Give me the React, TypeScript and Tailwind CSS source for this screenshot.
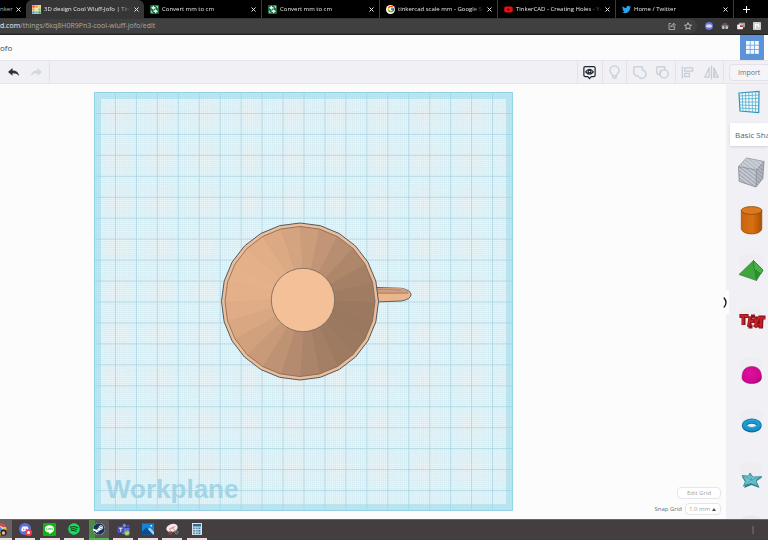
import { useState, type ReactNode } from 'react';
import { FcGoogle } from 'react-icons/fc';
import { FaDiscord, FaSpotify, FaSteam, FaTwitter, FaYoutube } from 'react-icons/fa';

type Tab = { id: string; title: string; icon: ReactNode };
type Tool = { label: string; divider: boolean; active?: boolean; icon: ReactNode };
type Shape = { label: string; drawing: ReactNode };

const TINKERCAD_TILES = [
  '#e8453c', '#f08a2c', '#f6c544',
  '#e9a13b', '#f7e08a', '#7cc46a',
  '#3f9bd8', '#57b8c9', '#4c9f50',
];

function TinkercadIcon() {
  return (
    <svg viewBox="0 0 9 9" className="size-[9px] shrink-0" aria-hidden="true">
      <rect width="9" height="9" fill="#f4efe0" />
      {TINKERCAD_TILES.map((color, i) => (
        <rect key={i} x={(i % 3) * 3 + 0.3} y={Math.floor(i / 3) * 3 + 0.3} width="2.4" height="2.4" fill={color} />
      ))}
    </svg>
  );
}

function ConvertIcon() {
  return (
    <svg viewBox="0 0 9 9" className="size-[9px] shrink-0" aria-hidden="true">
      <rect width="9" height="9" rx="1" fill="#1c6b41" />
      <path d="M4 .6 1 2.800 4 5V3.800h1.400V1.900H4zM5 4 8 6.200 5 8.400V7.100H3.600V5.200H5z" fill="#e4f3ea" />
      <path d="M5.800 1.200h1.700v2M1.400 5.600v2h1.400" fill="none" stroke="#b9e0ca" strokeWidth=".9" />
    </svg>
  );
}

function GoogleIcon() {
  return (
    <span className="flex size-[9px] shrink-0 items-center justify-center rounded-full bg-white">
      <FcGoogle className="size-2" />
    </span>
  );
}

const TABS: Tab[] = [
  { id: 'design', title: '3D design Cool Wluff-Jofo | Tink', icon: <TinkercadIcon /> },
  { id: 'convert-1', title: 'Convert mm to cm', icon: <ConvertIcon /> },
  { id: 'convert-2', title: 'Convert mm to cm', icon: <ConvertIcon /> },
  { id: 'google', title: 'tinkercad scale mm - Google Sea', icon: <GoogleIcon /> },
  {
    id: 'youtube',
    title: 'TinkerCAD - Creating Holes - Yo',
    icon: <FaYoutube className="size-[9px] shrink-0 text-[#f00d14]" />,
  },
  { id: 'twitter', title: 'Home / Twitter', icon: <FaTwitter className="size-[9px] shrink-0 text-[#2aa3ef]" /> },
];

function CloseIcon() {
  return (
    <svg viewBox="0 0 5 5" className="size-[5px]" aria-hidden="true">
      <path d="M.5.5l4 4M4.500.5l-4 4" stroke="#e8e8e8" strokeWidth="1" />
    </svg>
  );
}

function TabBar() {
  const [active, setActive] = useState('design');
  return (
    <nav className="flex h-[18px] shrink-0 overflow-hidden bg-black text-[6px] font-medium text-[#e8e8e8]">
      <div className="flex w-[26px] shrink-0 items-center justify-between pr-[5px]">
        <span className="text-[#b5b5b5]">nker</span>
        <button aria-label="Close tab"><CloseIcon /></button>
      </div>
      {TABS.map(tab => (
        <div
          key={tab.id}
          className={`flex w-[118px] shrink-0 items-center gap-[3px] pr-[5px] pl-[6px] ${
            tab.id === active ? 'rounded-t-md bg-[#363636]' : 'border-r border-[#3c3c3c]'
          }`}
        >
          {tab.icon}
          <button
            onClick={() => setActive(tab.id)}
            className="min-w-0 flex-1 mask-r-from-85% text-left leading-[10px] whitespace-nowrap"
          >
            {tab.title}
          </button>
          <button aria-label={`Close ${tab.title}`} className="shrink-0"><CloseIcon /></button>
        </div>
      ))}
      <button aria-label="New tab" className="flex w-6 shrink-0 items-center justify-center">
        <svg viewBox="0 0 7 7" className="size-[7px]" aria-hidden="true">
          <path d="M3.500 0v7M0 3.500h7" stroke="#fff" strokeWidth="1" />
        </svg>
      </button>
    </nav>
  );
}

function AddressBar() {
  return (
    <div className="flex h-[17px] shrink-0 items-center justify-between border-b border-[#222] bg-[#363636] pr-[7px] text-[7px]">
      <div className="flex h-3.5 flex-1 items-center rounded-r-full bg-[#404040] pr-[5px]">
        <label htmlFor="address" className="text-[#f0f0f0]">d.com</label>
        <input
          id="address"
          defaultValue="/things/6kq8H0R9Pn3-cool-wluff-jofo/edit"
          className="min-w-0 flex-1 bg-transparent text-[#a8a8a8] outline-none"
        />
        <button aria-label="Share" className="mr-2">
          <svg viewBox="0 0 8 8" className="size-2" fill="none" stroke="#b9b9b9" strokeWidth=".8" aria-hidden="true">
            <path d="M3 1.500H1v6h5.600V5" />
            <path d="M2.600 5.200c.2-1.600 1.200-2.600 2.900-2.700V1l2.100 2.100-2.100 2V3.800c-1.300 0-2.200.4-2.900 1.400z" />
          </svg>
        </button>
        <button aria-label="Bookmark">
          <svg viewBox="0 0 24 24" className="size-2" fill="none" stroke="#d5d5d5" strokeWidth="2.400" aria-hidden="true">
            <path d="M12 2l3 7 7.500.700-5.700 5 1.700 7.300L12 18.200 5.500 22l1.700-7.300-5.700-5L9 9z" />
          </svg>
        </button>
      </div>
      <div className="ml-2 flex gap-2">
        <button aria-label="Chat extension">
          <svg viewBox="0 0 8 8" className="size-2" aria-hidden="true">
            <circle cx="4" cy="4" r="4" fill="#6673cf" />
            <rect x="1.300" y="2.500" width="5.400" height="3" rx="1.300" fill="#eceefb" />
            <path d="M2.600 4h.8M4.600 4h.8" stroke="#6673cf" strokeWidth=".9" />
          </svg>
        </button>
        <button aria-label="Incognito extension">
          <svg viewBox="0 0 8 8" className="size-2" aria-hidden="true">
            <path d="M2 1h4l.7 2.500H1.300z" fill="#6e4f46" />
            <path d="M.3 3.800h7.400" stroke="#c58f7c" strokeWidth=".9" />
            <circle cx="2.300" cy="5.600" r="1.500" fill="#c3cad6" />
            <circle cx="5.700" cy="5.600" r="1.500" fill="#c3cad6" />
            <path d="M3.300 5.200h1.400" stroke="#c33e36" strokeWidth="1" />
          </svg>
        </button>
        <button aria-label="Window extension">
          <svg viewBox="0 0 8 8" className="size-2" aria-hidden="true">
            <rect x="2" y=".8" width="6" height="4.500" rx=".6" fill="#a7a7a7" />
            <rect x=".2" y="2.600" width="5.800" height="4.600" rx=".6" fill="#f2f2f2" />
            <path d="M3 3.300h3.500L5.700 5H3z" fill="#c9342c" />
          </svg>
        </button>
        <button aria-label="Notes extension">
          <svg viewBox="0 0 8 8" className="size-2" aria-hidden="true">
            <rect width="8" height="8" rx=".8" fill="#cfcfcf" />
            <path d="M2.500 6.500V2.500c1-1 1.700.2 1.700 1.300 0-1.400 1.600-1.600 1.600-.2v1.700" fill="none" stroke="#fff" strokeWidth="1.100" />
          </svg>
        </button>
      </div>
    </div>
  );
}

function Header() {
  return (
    <header className="flex h-[25px] shrink-0 items-center justify-between bg-[#fcfcfc] pr-1">
      <h1 className="text-[8px] text-[#3b4a5a]">ofo</h1>
      <button aria-label="Dashboard" className="flex h-full w-6 items-center justify-center bg-[#5c93d8]">
        <svg viewBox="0 0 13 13" className="size-[13px]" aria-hidden="true">
          {[0, 1, 2].map(row =>
            [0, 1, 2].map(col => (
              <rect key={`${row}${col}`} x={col * 4.5} y={row * 4.5} width="3.800" height="3.800" fill="#f3f8ff" />
            )),
          )}
        </svg>
      </button>
    </header>
  );
}

const TOOLS: Tool[] = [
  {
    label: 'Show all',
    divider: true,
    active: true,
    icon: (
      <>
        <path d="M3.500 1.700h9q1.500 0 1.500 1.500v7.600q0 1.500-1.500 1.500h-2.600L8 14.600l-1.900-2.300H3.500Q2 12.300 2 10.800V3.200q0-1.500 1.500-1.500z" />
        <path d="M3.900 7.200Q8 1.900 12.100 7.200 8 12.100 3.900 7.200z" />
        <circle cx="8" cy="7" r="1.500" />
      </>
    ),
  },
  {
    label: 'Hide',
    divider: true,
    icon: <path d="M6 11.500c0-2-2.900-2.800-2.900-5.700a4.900 4.900 0 0 1 9.800 0c0 2.900-2.900 3.700-2.900 5.700zM6.200 12v1.500q1.800 1.200 3.600 0V12" />,
  },
  {
    label: 'Group',
    divider: true,
    icon: <path d="M2 2h9v3.300a4.500 4.500 0 1 1-4.600 6.400H4.500L2 9.500z" />,
  },
  {
    label: 'Ungroup',
    divider: false,
    icon: (
      <>
        <path d="M5.500 10.500H4L2 8.500V2h8.500v2.500" />
        <circle cx="9.800" cy="9.500" r="4.300" />
        <path d="M5.500 10.500V6.500l1.800-.9" />
      </>
    ),
  },
  {
    label: 'Align',
    divider: true,
    icon: (
      <>
        <path d="M2.500 1.500v13" />
        <path d="M5 3h8.500v3.500H5zM5 9h5v3.500H5z" />
      </>
    ),
  },
  {
    label: 'Mirror',
    divider: false,
    icon: (
      <>
        <path d="M8 .5v15M5.500 3v10H.8zM10.500 3v10h4.700z" />
        <path d="M11.500 7v5" />
      </>
    ),
  },
];

function Toolbar() {
  return (
    <div className="flex h-6 shrink-0 overflow-hidden border-y border-[#e5e5eb] bg-[#f1f0f5]">
      <div className="flex w-[50px] shrink-0 items-center border-r border-[#e2e2e8]">
        <button aria-label="Undo" className="ml-2">
          <svg viewBox="0 0 11 9" className="h-[9px] w-[11px] text-[#2c333b]" aria-hidden="true">
            <path d="M4.500 0v2.500C8 2.500 10.600 4 11 8 9.500 5.800 7.500 5.200 4.500 5.200v2.600L0 3.900z" fill="currentColor" />
          </svg>
        </button>
        <button aria-label="Redo" className="ml-3">
          <svg viewBox="0 0 11 9" className="h-[9px] w-[11px] text-[#d0d8e1]" aria-hidden="true">
            <path d="M6.500 0v2.500C3 2.500.4 4 0 8c1.500-2.200 3.500-2.800 6.500-2.800v2.600L11 3.900z" fill="currentColor" />
          </svg>
        </button>
      </div>
      <div className="flex-1" />
      <div className="flex w-[147px] shrink-0 border-r border-[#e2e2e8]">
        {TOOLS.map(tool => (
          <button
            key={tool.label}
            aria-label={tool.label}
            className={`flex flex-1 items-center justify-center ${tool.divider ? 'border-l border-[#e2e2e8]' : ''}`}
          >
            <svg
              viewBox="0 0 16 16"
              className={`size-[15px] ${tool.active ? 'text-[#1f262e]' : 'text-[#c3ccd7]'}`}
              fill="none"
              stroke="currentColor"
              strokeWidth="1.300"
              strokeLinejoin="round"
              aria-hidden="true"
            >
              {tool.icon}
            </svg>
          </button>
        ))}
      </div>
      <div className="flex w-11 shrink-0 items-center pl-[5px]">
        <button className="h-[17px] w-full rounded-l-sm border border-r-0 border-[#e2e2e8] bg-[#f5f5f9] pl-2 text-left text-[7px] leading-[15px] font-medium text-[#6d747c]">
          Import
        </button>
      </div>
    </div>
  );
}

const SIDES = 24;

function ringPoint(cx: number, cy: number, r: number, i: number) {
  const a = ((i * 360) / SIDES) * (Math.PI / 180);
  return `${(cx + r * Math.cos(a)).toFixed(2)},${(cy + r * Math.sin(a)).toFixed(2)}`;
}

function ring(cx: number, cy: number, r: number) {
  return Array.from({ length: SIDES }, (_, i) => ringPoint(cx, cy, r, i)).join(' ');
}

// light falls from the upper left, so the lower right wall is darkest
function facetColor(i: number) {
  const a = (((i + 0.5) * 360) / SIDES - 25) * (Math.PI / 180);
  const t = (1 - Math.cos(a)) / 2;
  const dark = [154, 119, 95];
  const light = [229, 177, 138];
  return `rgb(${dark.map((d, k) => Math.round(d + (light[k] - d) * t)).join(',')})`;
}

function Cup() {
  return (
    <g strokeLinejoin="round">
      <path d="M282 195.500l25.500.8q9.500 2 9.500 6.400t-9.500 6.300L282 210z" fill="#ecb68d" stroke="#566069" strokeWidth="1" />
      <path d="M282 196h25q7 1.500 8 5l-33 .2z" fill="#cfa07e" />
      <path d="M282 201.200h32" fill="none" stroke="#7c6557" strokeWidth=".6" />
      <path d="M282 197.500q16-.3 25 .8" fill="none" stroke="#8d7464" strokeWidth=".5" />
      <polygon points={ring(206, 209.5, 78.5)} fill="#edbd98" stroke="#4d5a65" strokeWidth="1" />
      <polygon points={ring(206, 209.5, 75)} fill="#c99a77" />
      {Array.from({ length: SIDES }, (_, i) => {
        const color = facetColor(i);
        return (
          <polygon
            key={i}
            points={[
              ringPoint(206, 209.5, 75, i),
              ringPoint(206, 209.5, 75, i + 1),
              ringPoint(209, 208, 31, i + 1),
              ringPoint(209, 208, 31, i),
            ].join(' ')}
            fill={color}
            stroke={color}
            strokeWidth=".4"
          />
        );
      })}
      <polygon points={ring(206, 209.5, 75)} fill="none" stroke="#806b5f" strokeWidth=".8" />
      <circle cx="209" cy="208" r="31.700" fill="#f4c097" stroke="#6f665f" strokeWidth=".8" />
    </g>
  );
}

const PLANE = 419;

function gridPath(cells: number) {
  const step = PLANE / cells;
  return Array.from({ length: cells }, (_, i) => {
    const p = (i * step + 0.5).toFixed(2);
    return `M${p} 0V${PLANE}M0 ${p}H${PLANE}`;
  }).join('');
}

const FINE_GRID = gridPath(200);
const MAJOR_GRID = gridPath(20);

function Workplane() {
  return (
    <svg viewBox="0 0 419 419" className="h-full" role="img" aria-label="Workplane with a cup seen from above">
      <rect width="419" height="419" fill="#f1f9fb" />
      <path d={FINE_GRID} stroke="#a6d9e8" strokeWidth=".8" opacity=".42" />
      <path d={MAJOR_GRID} stroke="#7fb9cb" strokeWidth=".8" opacity=".5" />
      <rect x="3.500" y="3.500" width="412" height="412" fill="none" stroke="#93d8ec" strokeWidth="7" opacity=".5" />
      <rect x=".5" y=".5" width="418" height="418" fill="none" stroke="#8ccfe2" strokeWidth="1" opacity=".8" />
      <text x="12" y="406" fontSize="26" fontWeight="700" fontFamily="Liberation Sans, Arial, sans-serif" fill="#a3d5e6">
        Workplane
      </text>
      <Cup />
    </svg>
  );
}

function GridControls() {
  return (
    <div className="flex flex-col items-end justify-end gap-1 pr-[5px] pb-1 text-[6px] font-medium text-[#9b9fa5]">
      <button className="h-3 w-11 rounded-sm border border-[#e6e6ea] bg-white leading-[10px]">Edit Grid</button>
      <div className="flex items-center gap-[3px]">
        <label htmlFor="snap" className="text-[#667080]">Snap Grid</label>
        <div className="flex h-3 w-9 items-center rounded-sm border border-[#e6e6ea] bg-white pr-1 pl-[3px]">
          <select id="snap" defaultValue="1.0" className="min-w-0 flex-1 appearance-none bg-transparent leading-[10px] outline-none">
            <option value="0.5">0.5 mm</option>
            <option value="1.0">1.0 mm</option>
            <option value="2.0">2.0 mm</option>
          </select>
          <svg viewBox="0 0 4 3" className="h-[3px] w-1 shrink-0" aria-hidden="true">
            <path d="M2 0l2 3H0z" fill="#4b4f55" />
          </svg>
        </div>
      </div>
    </div>
  );
}

// every drawing sits in a 42x51 cell
const SHAPES: Shape[] = [
  {
    label: 'Box hole',
    drawing: (
      <>
        <defs>
          <pattern id="hatch" width="3" height="3" patternUnits="userSpaceOnUse" patternTransform="rotate(38)">
            <rect width="3" height="3" fill="#cdd0d8" />
            <rect width="3" height="1.400" fill="#9ea3b1" />
          </pattern>
        </defs>
        <path d="M12.500 18.500L20.500 10l17.500 3.500-1.200 17L30 39 13.200 33.500z" fill="url(#hatch)" stroke="#858994" strokeWidth=".8" />
        <path d="M12.500 18.500L30.500 22 38 13.500 20.500 10z" fill="#d4d6dd" opacity=".4" />
        <path d="M30.500 22L38 13.500 36.800 30.500 30 39z" fill="#868b99" opacity=".3" />
        <path d="M12.500 18.500L30.500 22 38 13.500M30.500 22L30 39" fill="none" stroke="#858994" strokeWidth=".7" />
      </>
    ),
  },
  {
    label: 'Cylinder',
    drawing: (
      <>
        <path d="M15.300 11.500v18.200c1 7 19.500 7 20.500 0V11.500z" fill="url(#orange)" stroke="#8f4a0c" strokeWidth=".7" />
        <ellipse cx="25.600" cy="11.500" rx="10.300" ry="3.900" fill="#dc7920" stroke="#8f4a0c" strokeWidth=".8" />
        <defs>
          <linearGradient id="orange">
            <stop offset="0" stopColor="#c9650f" />
            <stop offset=".55" stopColor="#d9700f" />
            <stop offset="1" stopColor="#a85008" />
          </linearGradient>
        </defs>
      </>
    ),
  },
  {
    label: 'Pyramid',
    drawing: (
      <>
        <ellipse cx="25" cy="12" rx="13" ry="9" fill="#eeedf1" />
        <g stroke="#247a26" strokeWidth=".6" strokeLinejoin="round">
          <path d="M27.500 10.500L13 24.500l17.500 6z" fill="#3fa53f" />
          <path d="M27.500 10.500L37 20l-6.500 10.500z" fill="#2c8f31" />
          <path d="M27.500 10.500L37 20l-2 4-7-5z" fill="#45b347" />
        </g>
      </>
    ),
  },
  {
    label: 'Text',
    drawing: (
      <>
        <ellipse cx="25" cy="13" rx="12" ry="7" fill="#eeedf1" />
        <g fill="none" strokeLinejoin="bevel">
          <path d="M13.500 15h9M17.500 15v9M24.500 15.500L23 26M23.500 20h5M25 15.500h4M22.500 25.500h4M29.500 15.500l2 11M34 16l-5 10.500M32.500 16.500h7M35.500 17.500l-.5 10" stroke="#8c151b" strokeWidth="4" />
          <path d="M13.500 14.500l9 .8M17 15v8.500M24 15.500L22.500 25M23.500 20h4M28.500 16l2.500 10M33 16.500L28 25.500M32 16.500l7 .8M35 17.500v9" stroke="#c4212a" strokeWidth="1.900" />
        </g>
      </>
    ),
  },
  {
    label: 'Half sphere',
    drawing: (
      <>
        <ellipse cx="25" cy="13" rx="12" ry="8" fill="#eeedf1" />
        <path d="M16 25.500C16 18 20 14.500 25.800 14.500S35.500 18 35.500 25.500c0 8-19.500 8-19.500 0z" fill="url(#magenta)" stroke="#970869" strokeWidth=".5" />
        <defs>
          <radialGradient id="magenta" cx=".4" cy=".4" r=".7">
            <stop offset="0" stopColor="#e00fa0" />
            <stop offset=".7" stopColor="#d20891" />
            <stop offset="1" stopColor="#a40572" />
          </radialGradient>
        </defs>
      </>
    ),
  },
  {
    label: 'Torus',
    drawing: (
      <>
        <ellipse cx="25" cy="13" rx="12" ry="7" fill="#eeedf1" />
        <ellipse cx="25.800" cy="22.500" rx="7.300" ry="4.300" fill="none" stroke="#0b6f9f" strokeWidth="5.200" />
        <ellipse cx="25.800" cy="22" rx="7.300" ry="4" fill="none" stroke="#1794cb" strokeWidth="3.900" />
        <ellipse cx="25.800" cy="21" rx="7" ry="3.600" fill="none" stroke="#38addc" strokeWidth="1" opacity=".7" />
      </>
    ),
  },
  {
    label: 'Star',
    drawing: (
      <>
        <ellipse cx="25" cy="16" rx="12" ry="8" fill="#eeedf1" />
        <path d="M24 20l3 4 9-.5-6 4 3.500 6.500-8-3-7.500 3 2-5L16 23l6.500.5z" fill="#2c7f8c" />
        <path d="M24 19l3 4 9-.5-6 4 2.500 6-7.500-3-7.500 2.500 2-5L16 21.500l6.500.5z" fill="#6cc4cf" stroke="#2d7c88" strokeWidth=".7" strokeLinejoin="round" />
        <path d="M24 19l1.500 7 10.500-3.500M25.500 26l7 6.500M25.500 26l-8 6M25.500 26L16 21.500" fill="none" stroke="#429aa6" strokeWidth=".7" />
      </>
    ),
  },
];

function ShapesPanel() {
  return (
    <aside className="relative w-[42px] shrink-0 bg-[#f1f0f5]">
      <button
        aria-label="Collapse shapes panel"
        className="absolute top-[206px] -left-[5px] z-10 flex h-6 w-2 items-center justify-center bg-[#fcfcfc]"
      >
        <svg viewBox="0 0 4 11" className="h-[11px] w-1" fill="none" aria-hidden="true">
          <path d="M.8.5q4.400 5 0 10" stroke="#15181c" strokeWidth="1.300" />
        </svg>
      </button>
      <div className="flex h-full flex-col overflow-hidden">
        <button aria-label="Workplane" className="h-[39px] shrink-0">
          <svg viewBox="0 0 42 39" className="h-[39px] w-[42px]" aria-hidden="true">
            <path d="M13 9l20-1.500-.3 21L14 27z" fill="#f5fbfd" stroke="#2b93b8" strokeWidth="1.200" />
            <path d="M13.200 12l19.600-1M13.300 15l19.500-.6M13.500 18h19.300M13.700 21l19 .6M13.800 24l19 1M16.200 9l.7 18.200M19.500 8.600l.4 18.800M22.800 8.300l.3 19.400M26.200 8l.2 20M29.600 7.700v20.500" stroke="#50aecb" strokeWidth=".8" />
          </svg>
        </button>
        <div className="ml-1 flex h-[23px] shrink-0 items-center bg-white shadow-sm">
          <select
            aria-label="Shape library"
            className="h-full w-full appearance-none bg-transparent pl-[5px] text-[8px] leading-[10px] text-[#566270] outline-none"
          >
            <option>Basic Shapes</option>
            <option>Text and Numbers</option>
          </select>
        </div>
        <div className="mt-0.5 flex flex-col">
          {SHAPES.map(shape => (
            <button key={shape.label} aria-label={shape.label} className="h-[51px] shrink-0">
              <svg viewBox="0 0 42 51" className="h-[51px] w-[42px]" aria-hidden="true">
                {shape.drawing}
              </svg>
            </button>
          ))}
          <svg viewBox="0 0 42 51" className="h-[51px] w-[42px] shrink-0" aria-hidden="true">
            <ellipse cx="25" cy="17" rx="11" ry="7" fill="#eae9ed" />
          </svg>
        </div>
      </div>
    </aside>
  );
}

const TASKBAR_APPS: { label: string; icon: ReactNode }[] = [
  {
    label: 'Discord',
    icon: (
      <span className="relative flex size-3 items-center justify-center rounded-full bg-[#5f6fe0]">
        <FaDiscord className="size-2 text-white" />
        <span className="absolute -right-px -bottom-px flex size-[7px] items-center justify-center rounded-full bg-[#e9404c]">
          <span className="size-[3px] rounded-full bg-white" />
        </span>
      </span>
    ),
  },
  {
    label: 'LINE',
    icon: (
      <svg viewBox="0 0 13 13" className="size-[13px]" aria-hidden="true">
        <rect width="13" height="13" rx="1" fill="#0db513" />
        <path d="M6.500 2.200c2.700 0 4.700 1.600 4.700 3.700 0 2-2 3.300-4.500 5.200-.5.300-.4-.6-.5-1.500-2.500-.2-4.400-1.700-4.400-3.700 0-2.100 2-3.700 4.700-3.700z" fill="#fff" />
        <path d="M3.600 5v1.800h1M5.600 5v1.800M6.700 6.800V5l1.100 1.800V5M10 5H9v1.800h1" fill="none" stroke="#0db513" strokeWidth=".5" />
      </svg>
    ),
  },
  {
    label: 'Spotify',
    icon: (
      <span className="rounded-full bg-[#173b22]">
        <FaSpotify className="size-3 text-[#1ed760]" />
      </span>
    ),
  },
  {
    label: 'Steam',
    icon: (
      <span className="rounded-full bg-white">
        <FaSteam className="size-3 text-[#12345c]" />
      </span>
    ),
  },
  {
    label: 'Teams',
    icon: (
      <svg viewBox="0 0 13 13" className="size-[13px]" aria-hidden="true">
        <circle cx="7.300" cy="2.600" r="1.800" fill="#7b83eb" />
        <circle cx="11" cy="3.300" r="1.200" fill="#5059c9" />
        <path d="M5 5h7.500v3.500q-.5 2.500-3 2.500H5z" fill="#656edb" />
        <rect x=".5" y="3.500" width="6.500" height="6.500" rx=".6" fill="#4b53bc" />
        <path d="M2 5.200h3.500M3.750 5.200v3.500" stroke="#fff" strokeWidth=".9" />
        <circle cx="10" cy="10" r="2.600" fill="#92c353" />
        <path d="M8.800 10l.9.900 1.600-1.700" fill="none" stroke="#fff" strokeWidth=".7" />
      </svg>
    ),
  },
  {
    label: 'Photos',
    icon: (
      <svg viewBox="0 0 12 12" className="size-3" aria-hidden="true">
        <rect y=".5" width="12" height="11" fill="#1583d8" />
        <path d="M0 11.500V9l4.200-4.600L11 11.500z" fill="#0d4d8c" />
        <path d="M6 6.200L7.800 4.600 12 9v2.500h-1z" fill="#9fd3f6" />
        <rect x="8.500" y="2" width="1.500" height="1.500" fill="#e5f4ff" />
      </svg>
    ),
  },
  {
    label: 'Snipping Tool',
    icon: (
      <svg viewBox="0 0 13 13" className="size-[13px]" aria-hidden="true">
        <ellipse cx="6" cy="5" rx="5.800" ry="4" fill="#f3e9e9" transform="rotate(-18 6 5)" />
        <path d="M3 6.500L9 3.500M6 4.500l4 4" stroke="#d2696c" strokeWidth=".8" />
        <circle cx="4.500" cy="9.800" r="1.600" fill="none" stroke="#c93b42" strokeWidth="1" />
        <circle cx="10.500" cy="9.300" r="1.500" fill="none" stroke="#6c93b4" strokeWidth="1" />
      </svg>
    ),
  },
  {
    label: 'Calculator',
    icon: (
      <svg viewBox="0 0 10 12" className="h-3 w-2.5" aria-hidden="true">
        <rect width="10" height="12" fill="#d7e6ee" />
        <rect x="1" y="1" width="8" height="2.500" fill="#2f6f92" />
        {[4.5, 7, 9.5].map(y =>
          [1, 3.7, 6.4].map(x => (
            <rect key={`${x}-${y}`} x={x} y={y} width="2" height="1.700" fill={x > 6 ? '#2385bb' : '#6b8fa3'} />
          )),
        )}
      </svg>
    ),
  },
];

function Taskbar() {
  return (
    <footer className="flex h-[21px] shrink-0 items-center justify-between border-t border-[#6a6466] bg-[#443e40] pr-[14px]">
      <div className="flex h-full gap-[3px]">
        <button aria-label="Chrome" className="flex h-full w-3 items-center overflow-hidden border-b-2 border-[#eadfe0] bg-[#686264]">
          <svg viewBox="0 0 7 13" className="h-[13px] w-[7px]" aria-hidden="true">
            <path d="M0 0a6.500 6.500 0 0 1 6 4H0z" fill="#e2483c" />
            <path d="M0 4h6q1.500 4-1.500 8H0z" fill="#f4c431" />
            <circle cx="0" cy="6" r="2.500" fill="#4a8af4" stroke="#fff" strokeWidth=".8" />
            <circle cx="3.500" cy="9.500" r="3.200" fill="#2b2528" />
            <circle cx="3.500" cy="10" r="1.700" fill="#e5bba0" />
          </svg>
        </button>
        <div className="flex h-full w-48 justify-between">
          {TASKBAR_APPS.map(app => (
            <button
              key={app.label}
              aria-label={app.label}
              className={`flex h-full w-5 items-center justify-center border-b-2 ${
                app.label === 'Steam'
                  ? 'border-[#55b84e] bg-linear-to-r from-[#4c8a46] from-30% to-[#5b5557] to-30%'
                  : 'border-[#eadfe0]'
              }`}
            >
              {app.icon}
            </button>
          ))}
        </div>
      </div>
      <div className="h-2 w-0.5 bg-[#5f595b]" />
    </footer>
  );
}

export default function App() {
  return (
    <div className="flex h-screen flex-col overflow-hidden bg-[#fcfcfc] font-['Open_Sans','Noto_Sans',sans-serif]">
      <TabBar />
      <AddressBar />
      <Header />
      <Toolbar />
      <div className="flex min-h-0 flex-1">
        <main className="flex min-w-0 flex-1 justify-between">
          <div className="h-full py-2 pl-[94px]">
            <Workplane />
          </div>
          <GridControls />
        </main>
        <ShapesPanel />
      </div>
      <Taskbar />
    </div>
  );
}
